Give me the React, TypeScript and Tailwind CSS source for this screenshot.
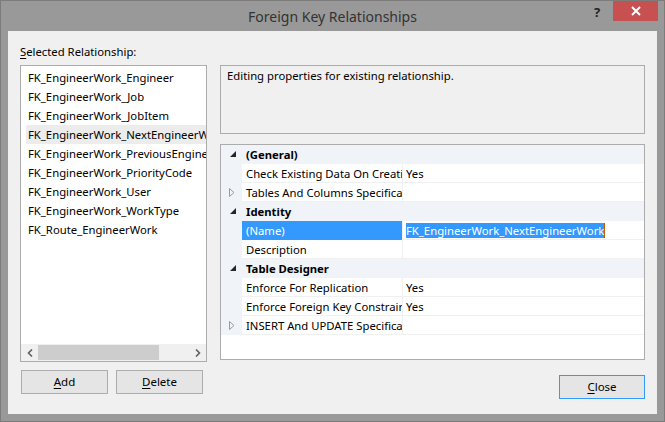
import React from 'react';

const font = { fontFamily: '"Noto Sans", "Liberation Sans", sans-serif' };

const relationships = [
  'FK_EngineerWork_Engineer',
  'FK_EngineerWork_Job',
  'FK_EngineerWork_JobItem',
  'FK_EngineerWork_NextEngineerWork',
  'FK_EngineerWork_PreviousEngineerWork',
  'FK_EngineerWork_PriorityCode',
  'FK_EngineerWork_User',
  'FK_EngineerWork_WorkType',
  'FK_Route_EngineerWork',
];

type Row =
  | { kind: 'cat'; label: string }
  | { kind: 'prop'; label: string; value?: string; expander?: boolean; selected?: boolean };

const rows: Row[] = [
  { kind: 'cat', label: '(General)' },
  { kind: 'prop', label: 'Check Existing Data On Creation Or Re-Enabling', value: 'Yes' },
  { kind: 'prop', label: 'Tables And Columns Specification', expander: true },
  { kind: 'cat', label: 'Identity' },
  { kind: 'prop', label: '(Name)', value: 'FK_EngineerWork_NextEngineerWork', selected: true },
  { kind: 'prop', label: 'Description' },
  { kind: 'cat', label: 'Table Designer' },
  { kind: 'prop', label: 'Enforce For Replication', value: 'Yes' },
  { kind: 'prop', label: 'Enforce Foreign Key Constraint', value: 'Yes' },
  { kind: 'prop', label: 'INSERT And UPDATE Specification', expander: true },
];

const Expanded = () => (
  <svg width="6" height="6" viewBox="0 0 6 6">
    <path d="M6 0 L6 6 L0 6 Z" fill="#262626" />
  </svg>
);

const Collapsed = () => (
  <svg width="6" height="9" viewBox="0 0 6 9">
    <path d="M0.5 0.5 L5 4.5 L0.5 8.5 Z" fill="none" stroke="#9a9a9a" strokeWidth="1" />
  </svg>
);

const DialogButton: React.FC<{ mnemonic: string; rest: string; focused?: boolean; className?: string }> = ({
  mnemonic, rest, focused, className = '',
}) => (
  <button
    className={`h-[24px] bg-[#e5e5e5] text-[11.5px] text-black flex items-center justify-center ${
      focused ? 'border border-[#3399ff]' : 'border border-[#acacac]'
    } ${className}`}
  >
    <span className="underline underline-offset-2">{mnemonic}</span>
    {rest}
  </button>
);

export default function App() {
  return (
    <div className="w-[665px] h-[422px] bg-[#999999] border border-[#7c7c7c] flex flex-col" style={font}>
      {/* title bar */}
      <div className="h-[30px] flex items-start">
        <div className="flex-1 pl-[70px] h-[30px] flex items-center justify-center text-[14px] text-[#333333]">
          Foreign Key Relationships
        </div>
        <div className="w-[14px] pt-[5px] text-[13px] font-bold text-[#222] leading-none">?</div>
        <div className="ml-[5px] w-[45px] h-[20px] bg-[#c75050] flex items-center justify-center">
          <svg width="10" height="10" viewBox="0 0 10 10">
            <path d="M1 1 L9 9 M9 1 L1 9" stroke="#ffffff" strokeWidth="2" />
          </svg>
        </div>
        <div className="w-[6px]" />
      </div>

      {/* client */}
      <div className="flex-1 mx-[7px] mb-[7px] bg-[#f0f0f0] flex pl-[12px] pr-[12px] text-[11.3px] text-black">
        {/* left column */}
        <div className="w-[187px] flex flex-col">
          <div className="h-[34px] pt-[13px] leading-[16px]">
            <span className="underline underline-offset-2">S</span>elected Relationship:
          </div>
          <div className="h-[297px] bg-white border border-[#acacac] flex flex-col">
            <div className="flex-1 pt-[2px] pl-[5px] overflow-hidden">
              {relationships.map((r, i) => (
                <div
                  key={r}
                  className={`h-[19px] pl-[2px] leading-[20px] whitespace-nowrap overflow-hidden ${
                    i === 3 ? 'bg-[#ececec]' : ''
                  }`}
                >
                  {r}
                </div>
              ))}
            </div>
            <div className="h-[17px] bg-[#f0f0f0] flex items-center">
              <div className="w-[17px] flex justify-center">
                <svg width="6" height="8" viewBox="0 0 6 8">
                  <path d="M5 0.5 L1.5 4 L5 7.5" fill="none" stroke="#606060" strokeWidth="1.6" />
                </svg>
              </div>
              <div className="w-[121px] h-[15px] bg-[#cdcdcd]" />
              <div className="flex-1" />
              <div className="w-[17px] flex justify-center">
                <svg width="6" height="8" viewBox="0 0 6 8">
                  <path d="M1 0.5 L4.5 4 L1 7.5" fill="none" stroke="#606060" strokeWidth="1.6" />
                </svg>
              </div>
            </div>
          </div>
          <div className="mt-[8px] pl-[1px] flex gap-[8px]">
            <DialogButton mnemonic="A" rest="dd" className="w-[87px]" />
            <DialogButton mnemonic="D" rest="elete" className="w-[87px]" />
          </div>
        </div>

        {/* right column */}
        <div className="flex-1 ml-[13px] flex flex-col">
          <div className="mt-[34px] h-[69px] border border-[#acacac] bg-[#f0f0f0] pl-[6px] pt-[2px] leading-[16px]">
            Editing properties for existing relationship.
          </div>
          <div className="mt-[10px] h-[216px] bg-white border border-[#acacac] overflow-hidden">
            {rows.map((row, i) =>
              row.kind === 'cat' ? (
                <div key={i} className="h-[19px] flex bg-[#f0f3f7] border-b border-[#f0f3f7]">
                  <div className="w-[21px] flex items-center justify-center pl-[2px]">
                    <Expanded />
                  </div>
                  <div className="pl-[4px] font-bold leading-[19px]">{row.label}</div>
                </div>
              ) : (
                <div key={i} className="h-[19px] flex">
                  <div className="w-[21px] bg-[#f0f3f7] flex items-center justify-center pl-[1px]">
                    {row.expander && <Collapsed />}
                  </div>
                  <div
                    className={`w-[161px] pl-[4px] leading-[19px] whitespace-nowrap overflow-hidden border-r border-[#f0f0f0] ${
                      row.selected ? 'bg-[#3399ff] text-white' : 'border-b border-b-[#f0f0f0]'
                    }`}
                  >
                    {row.label}
                  </div>
                  <div className="flex-1 pl-[3px] leading-[19px] border-b border-[#f0f0f0] flex items-center whitespace-nowrap">
                    {row.value &&
                      (row.selected ? (
                        <>
                          <span className="bg-[#3399ff] text-white leading-[15px]">{row.value}</span>
                          <span className="w-px h-[15px] bg-[#c06000]" />
                        </>
                      ) : (
                        <span className="leading-[19px]">{row.value}</span>
                      ))}
                  </div>
                </div>
              )
            )}
          </div>
          <div className="mt-[15px] flex justify-end">
            <DialogButton mnemonic="C" rest="lose" focused className="w-[86px]" />
          </div>
        </div>
      </div>
    </div>
  );
}
